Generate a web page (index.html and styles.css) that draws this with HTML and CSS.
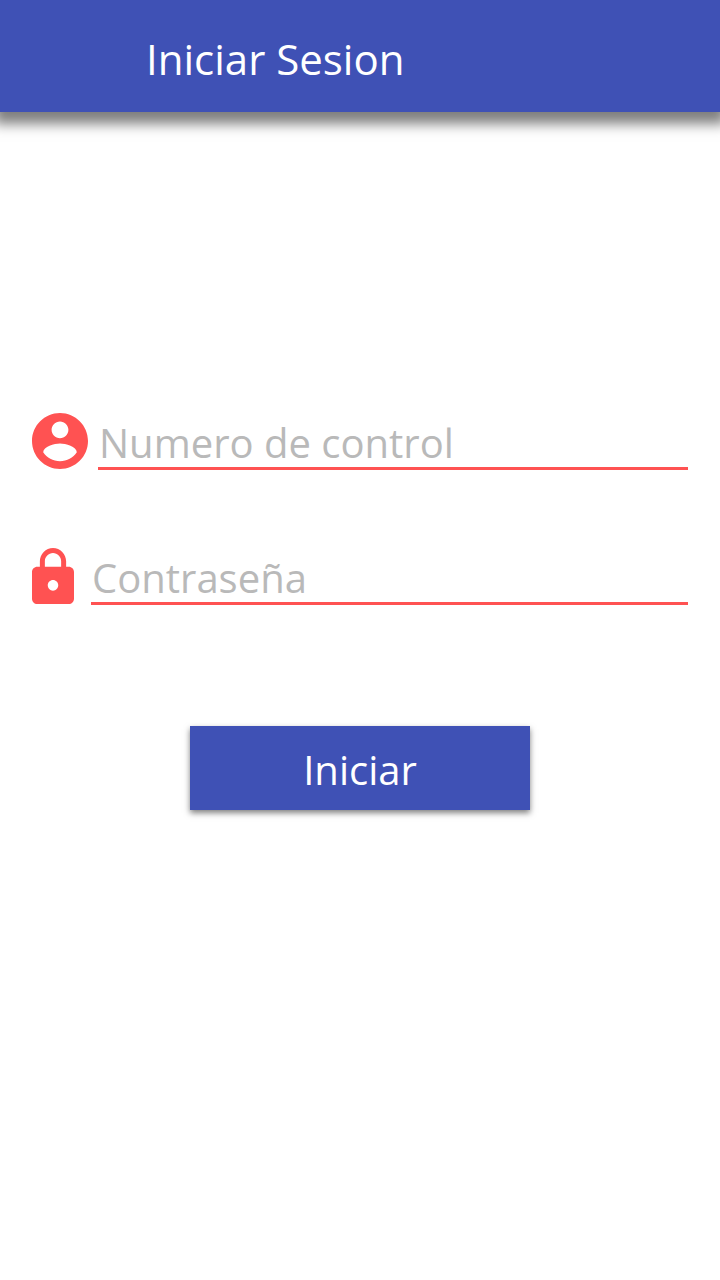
FILE: index.html
```html
<!DOCTYPE html>
<html lang="es">
<head>
<meta charset="utf-8">
<title>Iniciar Sesion</title>
<link rel="stylesheet" href="styles.css">
</head>
<body>
<header class="app-bar"><h1 class="title">Iniciar Sesion</h1></header>
<form class="login">
  <label class="field user">
    <svg class="icon" width="56" height="56" viewBox="2 2 20 20"><path d="M12 2C6.48 2 2 6.48 2 12s4.480 10 10 10 10-4.480 10-10S17.520 2 12 2zm0 3c1.660 0 3 1.340 3 3s-1.340 3-3 3-3-1.340-3-3 1.340-3 3-3zm0 14.200c-2.500 0-4.710-1.280-6-3.220.03-1.990 4-3.080 6-3.080 1.990 0 5.970 1.090 6 3.080-1.290 1.940-3.500 3.220-6 3.220z"/></svg>
    <input class="input" type="text" placeholder="Numero de control">
  </label>
  <label class="field password">
    <svg class="icon" width="42" height="56" viewBox="4 1 16 21" preserveAspectRatio="none"><path d="M18 8h-1V6c0-2.760-2.240-5-5-5S7 3.240 7 6v2H6c-1.100 0-2 .9-2 2v10c0 1.100.9 2 2 2h12c1.100 0 2-.9 2-2V10c0-1.100-.9-2-2-2zm-6 9c-1.100 0-2-.9-2-2s.9-2 2-2 2 .9 2 2-.9 2-2 2zm3.100-9H8.900V6c0-1.710 1.390-3.100 3.100-3.100 1.710 0 3.100 1.390 3.100 3.100v2z"/></svg>
    <input class="input" type="password" placeholder="Contraseña">
  </label>
  <button class="submit" type="button">Iniciar</button>
</form>
</body>
</html>
```
FILE: styles.css
```css
* { box-sizing: border-box; }
body { margin: 0; min-height: 1280px; background: #fff; font-family: "Open Sans", sans-serif; overflow-x: hidden; }
.app-bar { height: 112px; padding: 0 146px; display: flex; align-items: center; background: #3f51b5; box-shadow: 0 6px 12px 6px rgba(0, 0, 0, .5); }
.title { margin: 0; padding-top: 5px; font-size: 42px; line-height: 58px; font-weight: 400; color: #fff; white-space: nowrap; }
.login { display: flex; flex-direction: column; padding: 301px 32px 0; }
.field { display: flex; height: 57px; }
.user { gap: 10px; }
.password { gap: 17px; margin-top: 78px; }
.icon { flex: none; fill: #ff5252; }
.input { flex: 1; min-width: 0; height: 57px; padding: 4px 0 0 1px; border: 0; border-bottom: 3px solid #ff5252; background: none; outline: 0; font: 400 40px "Open Sans", sans-serif; }
.input::placeholder { color: #b9b9b9; opacity: 1; }
.submit { align-self: center; width: 340px; height: 84px; margin-top: 121px; padding: 3px 0 0; border: 0; background: #3f51b5; color: #fff; font: 400 40px "Open Sans", sans-serif; box-shadow: 0 3px 6px rgba(0, 0, 0, .5); }
```
